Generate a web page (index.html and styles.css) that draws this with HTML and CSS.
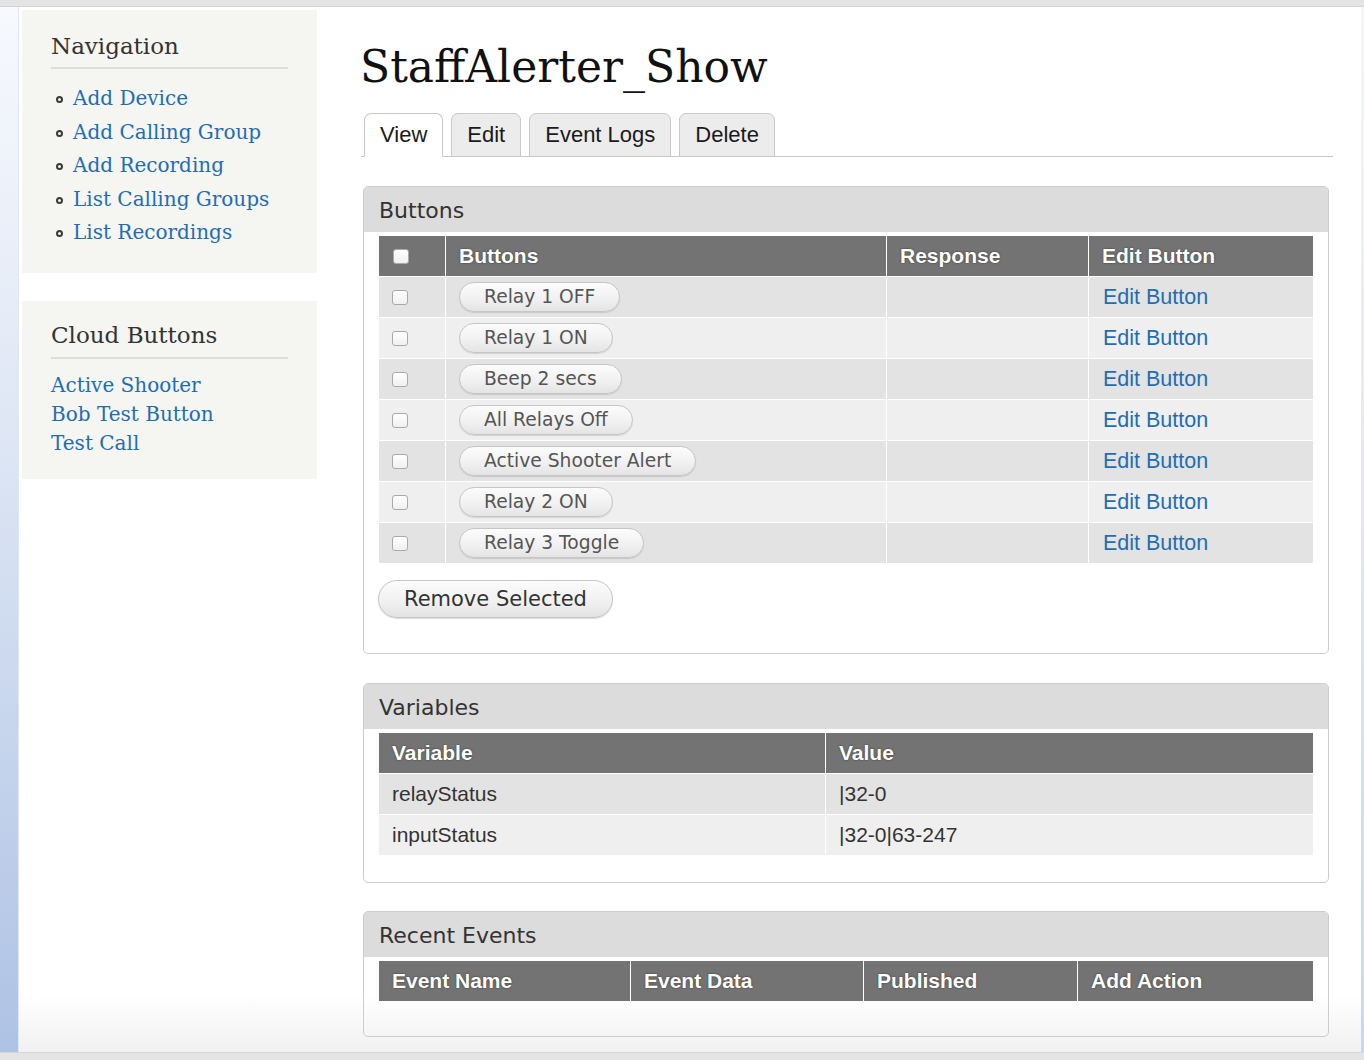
FILE: index.html
```html
<!DOCTYPE html>
<html>

<head>
    <meta http-equiv="Content-Type" content="text/html; charset=utf-8" />
    <title>StaffAlerter_Show</title>
    <link rel="stylesheet" href="styles.css">
</head>

<body>
    <div class="topbar"></div>
    <div class="frame">
        <div class="edge_left"></div>
        <div class="page">
            <div class="sidebar">
                <div class="block">
                    <h2>Navigation</h2>
                    <ul class="nav">
                        <li><span class="dot"></span><a href="#">Add Device</a></li>
                        <li><span class="dot"></span><a href="#">Add Calling Group</a></li>
                        <li><span class="dot"></span><a href="#">Add Recording</a></li>
                        <li><span class="dot"></span><a href="#">List Calling Groups</a></li>
                        <li><span class="dot"></span><a href="#">List Recordings</a></li>
                    </ul>
                </div>
                <div class="block block_cloud">
                    <h2>Cloud Buttons</h2>
                    <ul class="cloud">
                        <li><a href="#">Active Shooter</a></li>
                        <li><a href="#">Bob Test Button</a></li>
                        <li><a href="#">Test Call</a></li>
                    </ul>
                </div>
            </div>

            <div class="main">
                <h1>StaffAlerter_Show</h1>
                <ul class="tabs">
                    <li class="active"><a href="#">View</a></li>
                    <li><a href="#">Edit</a></li>
                    <li><a href="#">Event Logs</a></li>
                    <li><a href="#">Delete</a></li>
                </ul>

                <div class="fieldset fs_buttons">
                    <div class="legend">Buttons</div>
                    <table class="grid">
                        <thead>
                            <tr>
                                <th class="c_check"><input type="checkbox" class="head_check" /></th>
                                <th class="c_btn">Buttons</th>
                                <th class="c_resp">Response</th>
                                <th>Edit Button</th>
                            </tr>
                        </thead>
                        <tbody>
                            <tr class="odd">
                                <td><input type="checkbox" /></td>
                                <td><button class="pill">Relay 1 OFF</button></td>
                                <td></td>
                                <td><a href="#">Edit Button</a></td>
                            </tr>
                            <tr class="even">
                                <td><input type="checkbox" /></td>
                                <td><button class="pill">Relay 1 ON</button></td>
                                <td></td>
                                <td><a href="#">Edit Button</a></td>
                            </tr>
                            <tr class="odd">
                                <td><input type="checkbox" /></td>
                                <td><button class="pill">Beep 2 secs</button></td>
                                <td></td>
                                <td><a href="#">Edit Button</a></td>
                            </tr>
                            <tr class="even">
                                <td><input type="checkbox" /></td>
                                <td><button class="pill">All Relays Off</button></td>
                                <td></td>
                                <td><a href="#">Edit Button</a></td>
                            </tr>
                            <tr class="odd">
                                <td><input type="checkbox" /></td>
                                <td><button class="pill">Active Shooter Alert</button></td>
                                <td></td>
                                <td><a href="#">Edit Button</a></td>
                            </tr>
                            <tr class="even">
                                <td><input type="checkbox" /></td>
                                <td><button class="pill">Relay 2 ON</button></td>
                                <td></td>
                                <td><a href="#">Edit Button</a></td>
                            </tr>
                            <tr class="odd">
                                <td><input type="checkbox" /></td>
                                <td><button class="pill">Relay 3 Toggle</button></td>
                                <td></td>
                                <td><a href="#">Edit Button</a></td>
                            </tr>
                        </tbody>
                    </table>
                    <button class="remove">Remove Selected</button>
                </div>

                <div class="fieldset fs_vars">
                    <div class="legend">Variables</div>
                    <table class="grid">
                        <thead>
                            <tr>
                                <th class="c_var">Variable</th>
                                <th>Value</th>
                            </tr>
                        </thead>
                        <tbody>
                            <tr class="odd">
                                <td>relayStatus</td>
                                <td>|32-0</td>
                            </tr>
                            <tr class="even">
                                <td>inputStatus</td>
                                <td>|32-0|63-247</td>
                            </tr>
                        </tbody>
                    </table>
                </div>

                <div class="fieldset fs_events">
                    <div class="legend">Recent Events</div>
                    <table class="grid">
                        <thead>
                            <tr>
                                <th class="c_ename">Event Name</th>
                                <th class="c_edata">Event Data</th>
                                <th class="c_pub">Published</th>
                                <th>Add Action</th>
                            </tr>
                        </thead>
                    </table>
                </div>
            </div>
        </div>
        <div class="edge_right"></div>
    </div>
    <div class="bottombar"></div>
</body>

</html>
```

FILE: styles.css
```css
* {
    margin: 0;
    padding: 0;
}

body {
    background: #e4e4e4;
    width: 1364px;
    height: 1060px;
    overflow: hidden;
}

li {
    list-style: none;
}

a {
    text-decoration: none;
    color: #1f6db3;
}

.topbar {
    height: 6px;
    background: #e4e4e4;
    border-bottom: 1px solid #d4d4d4;
}

.frame {
    display: flex;
    height: 1045px;
}

.edge_left {
    width: 18px;
    border-right: 1px solid #dfe6f3;
    background: linear-gradient(to bottom, #f7f9fd 0%, #dfe7f5 40%, #aec2e4 100%);
}

.edge_right {
    width: 3px;
    background: linear-gradient(to bottom, #f4f7fc 0%, #c9d6ee 100%);
}

.page {
    flex: 1;
    display: flex;
    padding: 3px 28px 0 3px;
    background: linear-gradient(to bottom, #ffffff 0%, #ffffff 94.5%, #f1f1f1 100%);
}

/* sidebar */

.sidebar {
    width: 295px;
    flex: none;
}

.block {
    background: #f5f5f1;
    padding: 22px 29px 23px;
}

.block h2 {
    font: normal 23px/28px "DejaVu Serif", "Liberation Serif", serif;
    color: #333;
    padding-bottom: 7px;
    border-bottom: 2px solid #dddddb;
}

.nav {
    margin-top: 13px;
}

.nav li {
    font: 20px/33.5px "DejaVu Serif", "Liberation Serif", serif;
    padding-left: 5px;
}

.nav .dot {
    display: inline-block;
    width: 3px;
    height: 3px;
    border: 2px solid #3a3a3a;
    border-radius: 50%;
    vertical-align: middle;
    margin-right: 10px;
}

.block_cloud {
    margin-top: 28px;
    padding-top: 20px;
    padding-bottom: 21px;
}

.block_cloud h2 {
    padding-bottom: 8px;
}

.cloud {
    margin-top: 12px;
}

.cloud li {
    font: 20px/29px "DejaVu Serif", "Liberation Serif", serif;
}

/* main */

.main {
    flex: 1;
    margin-left: 44px;
}

h1 {
    font: normal 44px/50px "DejaVu Serif", "Liberation Serif", serif;
    color: #111;
    margin-top: 32px;
    margin-left: -1px;
}

.tabs {
    display: flex;
    align-items: flex-end;
    margin-top: 21px;
    padding-left: 3px;
    border-bottom: 1px solid #c8c8c8;
}

.tabs li {
    margin-right: 8px;
    margin-bottom: -1px;
}

.tabs a {
    display: block;
    font: 22px/42px "Liberation Sans", Arial, sans-serif;
    color: #1a1a1a;
    padding: 0 15px;
    background: #ececec;
    border: 1px solid #c8c8c8;
    border-bottom: 1px solid #c8c8c8;
    border-radius: 7px 7px 0 0;
}

.tabs .active a {
    background: #fff;
    border-bottom-color: #fff;
}

/* fieldsets */

.fieldset {
    margin: 0 4px 0 2px;
    border: 1px solid #cdcdcd;
    border-radius: 5px;
}

.fs_buttons {
    margin-top: 29px;
    padding-bottom: 35px;
}

.fs_vars {
    margin-top: 29px;
    padding-bottom: 27px;
}

.fs_events {
    margin-top: 28px;
    padding-bottom: 35px;
}

.legend {
    background: #dcdcdc;
    border-radius: 4px 4px 0 0;
    font: 22px/43px "DejaVu Sans", Verdana, sans-serif;
    color: #333;
    padding: 2px 15px 0;
}

.grid {
    width: calc(100% - 30px);
    margin: 4px 15px 0;
    border-collapse: collapse;
    font: 21px "Liberation Sans", Arial, sans-serif;
    color: #333;
}

.grid th {
    background: #737373;
    color: #fff;
    font-weight: bold;
    text-align: left;
    height: 40px;
    padding: 0 13px;
    text-shadow: 0 0 2px #333;
    border-left: 1px solid #fff;
}

.grid th:first-child,
.grid td:first-child {
    border-left: none;
}

.grid td {
    height: 40px;
    padding: 0 13px;
    border-top: 1px solid #fff;
    border-left: 1px solid #fff;
    vertical-align: middle;
}

.grid td a {
    font-size: 21.5px;
    margin-left: 1px;
}

.grid .odd td {
    background: #e3e3e3;
}

.grid .even td {
    background: #efefef;
}

.c_check {
    width: 40px;
}

.c_btn {
    width: 414px;
}

.c_resp {
    width: 175px;
}

.c_var {
    width: 420px;
}

.c_ename {
    width: 225px;
}

.c_edata {
    width: 206px;
}

.c_pub {
    width: 187px;
}

input[type=checkbox] {
    -webkit-appearance: none;
    appearance: none;
    display: block;
    width: 16px;
    height: 15px;
    border: 1px solid #a9a9a9;
    border-radius: 3px;
    background: linear-gradient(to bottom, #ffffff, #f0f0f0);
}

.head_check {
    border-color: #fff;
    background: #fff;
    margin-left: 1px;
}

.pill {
    display: block;
    height: 30px;
    font: 18.7px/28px "DejaVu Sans", Verdana, sans-serif;
    color: #555;
    padding: 0 24px;
    border: 1px solid #c6c6c6;
    border-radius: 15px;
    background: linear-gradient(to bottom, #fcfcfc 0%, #f0f0f0 60%, #e4e4e4 100%);
    box-shadow: 0 1px 1px rgba(0, 0, 0, 0.12);
}

.remove {
    display: block;
    height: 38px;
    margin: 17px 0 0 14px;
    font: 21px/36px "DejaVu Sans", Verdana, sans-serif;
    color: #333;
    padding: 0 25px;
    border: 1px solid #c6c6c6;
    border-radius: 19px;
    background: linear-gradient(to bottom, #fcfcfc 0%, #f0f0f0 60%, #e2e2e2 100%);
    box-shadow: 0 1px 1px rgba(0, 0, 0, 0.15);
}

.bottombar {
    height: 8px;
    border-top: 1px solid #d6d6d6;
    background: #e4e4e4;
}
```
